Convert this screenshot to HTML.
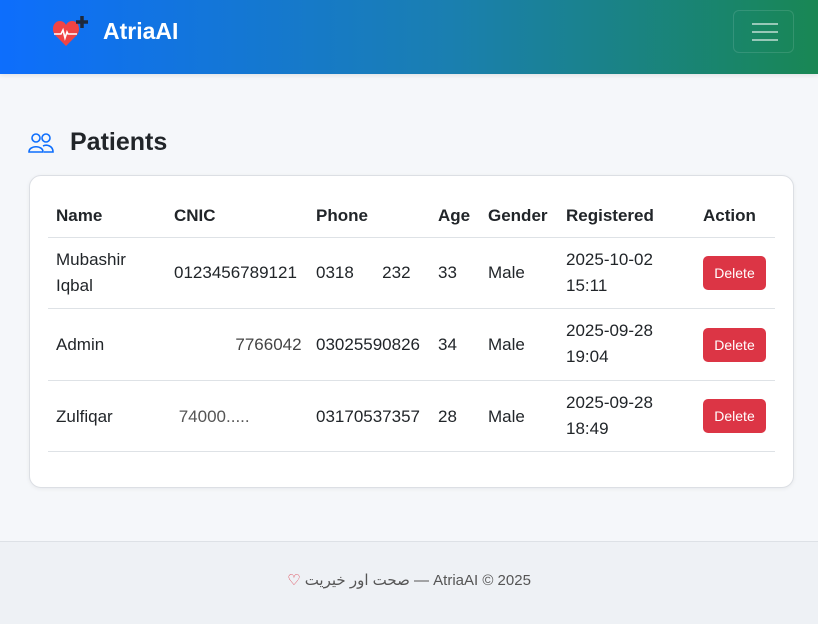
<!DOCTYPE html>
<html><head><meta charset="utf-8"><style>
*{box-sizing:border-box;margin:0;padding:0}
body{width:818px;height:624px;background:#f5f7fa;font-family:"Liberation Sans",sans-serif;color:#212529;position:relative;overflow:hidden}
.nav{position:absolute;left:0;top:0;width:818px;height:74px;background:linear-gradient(90deg,#0d6efd 0%,#1a7fb0 55%,#198754 100%);box-shadow:0 2px 4px rgba(0,0,0,.08)}
.brand{position:absolute;left:103px;top:18px;color:#fff;font-weight:bold;font-size:23px}
.burger{position:absolute;left:733px;top:10px;width:61px;height:43px;border:1px solid rgba(255,255,255,.12);border-radius:6px}
.burger i{position:absolute;left:18px;width:26px;height:2px;background:rgba(255,255,255,.55)}
h1{position:absolute;left:70px;top:128px;font-size:25px;font-weight:bold}
.card{position:absolute;left:29px;top:175px;width:765px;height:313px;background:#fff;border:1px solid #dcdfe4;border-radius:12px;box-shadow:0 1px 4px rgba(0,0,0,.06)}
.t{position:absolute;font-size:17px;line-height:26px;white-space:nowrap}
.th{font-weight:bold}
.line{position:absolute;left:48px;width:727px;height:1px;background:#dee2e6}
.btn{position:absolute;left:703px;width:63px;height:34px;background:#dc3545;color:#fff;border-radius:5px;font-size:14px;text-align:center;line-height:34px}
.foot{position:absolute;left:0;top:541px;width:818px;height:83px;background:#eef1f5;border-top:1px solid #dde1e6}
.ft{position:absolute;left:0;width:818px;top:29px;text-align:center;font-size:15px;color:#555;font-family:"Liberation Sans","DejaVu Sans",sans-serif}
</style></head><body>
<div class="nav">
<svg style="position:absolute;left:52px;top:14px" width="38" height="34" viewBox="0 0 38 34"><path d="M14 32 L3 21 C-1 16 1 7 8 7 C11 7 13 9 14 11 C15 9 17 7 20 7 C27 7 29 16 25 21Z" fill="#ef4444"/><path d="M2 20 H9 L11 16 L13 24 L15 18 L16 20 H25" stroke="#fff" stroke-width="1.6" fill="none"/><path d="M30 2 V14 M24 8 H36" stroke="#1e293b" stroke-width="3.5"/></svg>
<div class="brand">AtriaAI</div>
<div class="burger"><i style="top:12px"></i><i style="top:20px"></i><i style="top:28px"></i></div>
</div>
<svg style="position:absolute;left:28px;top:132px" width="26" height="22" viewBox="0 0 26 22" fill="none" stroke="#0d6efd" stroke-width="1.6"><circle cx="8" cy="6" r="4"/><circle cx="18" cy="6" r="4"/><path d="M1 20 C1 13 15 13 15 20 Z"/><path d="M15 14 C19 12 25 14 25 20 H16"/></svg>
<h1>Patients</h1>
<div class="card"></div>
<div class="t th" style="left:56px;top:203px">Name</div>
<div class="t th" style="left:174px;top:203px">CNIC</div>
<div class="t th" style="left:316px;top:203px">Phone</div>
<div class="t th" style="left:438px;top:203px">Age</div>
<div class="t th" style="left:488px;top:203px">Gender</div>
<div class="t th" style="left:566px;top:203px">Registered</div>
<div class="t th" style="left:703px;top:203px">Action</div>
<div class="line" style="top:237px"></div>
<div class="t" style="left:56px;top:247px">Mubashir<br>Iqbal</div>
<div class="t" style="left:174px;top:260px">0123456789121</div>
<div class="t" style="left:316px;top:260px">0318<span style="color:#ccc">&nbsp;&nbsp;&nbsp;&nbsp;&nbsp;&nbsp;</span>232</div>
<div class="t" style="left:438px;top:260px">33</div>
<div class="t" style="left:488px;top:260px">Male</div>
<div class="t" style="left:566px;top:247px">2025-10-02<br>15:11</div>
<div class="btn" style="top:256px">Delete</div>
<div class="line" style="top:308px"></div>
<div class="t" style="left:56px;top:332px">Admin</div>
<div class="t" style="left:174px;top:332px;color:#444">&nbsp;&nbsp;&nbsp;&nbsp;&nbsp;&nbsp;&nbsp;&nbsp;&nbsp;&nbsp;&nbsp;&nbsp;&nbsp;7766042</div>
<div class="t" style="left:316px;top:332px">03025590826</div>
<div class="t" style="left:438px;top:332px">34</div>
<div class="t" style="left:488px;top:332px">Male</div>
<div class="t" style="left:566px;top:318px">2025-09-28<br>19:04</div>
<div class="btn" style="top:328px">Delete</div>
<div class="line" style="top:380px"></div>
<div class="t" style="left:56px;top:404px">Zulfiqar</div>
<div class="t" style="left:174px;top:404px;color:#555">&nbsp;74000.....</div>
<div class="t" style="left:316px;top:404px">03170537357</div>
<div class="t" style="left:438px;top:404px">28</div>
<div class="t" style="left:488px;top:404px">Male</div>
<div class="t" style="left:566px;top:390px">2025-09-28<br>18:49</div>
<div class="btn" style="top:399px">Delete</div>
<div class="line" style="top:451px"></div>
<div class="foot"><div class="ft"><span style="color:#dc3545">♡</span> صحت اور خیریت — AtriaAI © 2025</div></div>
</body></html>
